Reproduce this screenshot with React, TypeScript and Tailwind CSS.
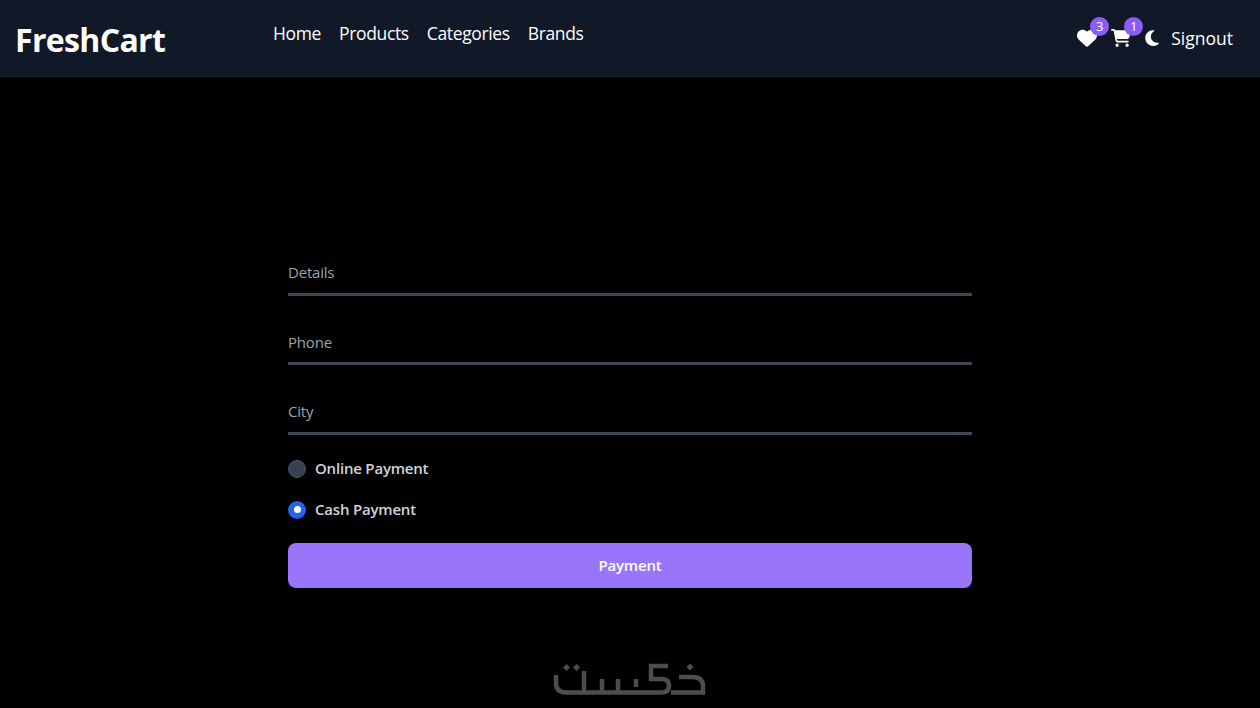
import { FaCartShopping, FaHeart, FaMoon } from 'react-icons/fa6';

const FONT = "font-['Open_Sans','Noto_Sans',sans-serif]";

function Field({ label }: { label: string }) {
  return (
    <div className="h-[39px] pb-[5px] border-b-[3px] border-[#404855] flex items-center">
      <span className="text-[15px] text-[#9ca3af] leading-5 tracking-[-0.2px]">{label}</span>
    </div>
  );
}

function KhamsatLogo() {
  return (
    <svg width="180" height="58" viewBox="0 0 180 58" fill="none" stroke="#4d4d4d" strokeWidth="4.5">
      {/* wordmark, drawn right to left */}
      <path d="M16 24V32Q16 41.5 26 41.5H107" />
      <path d="M44 20V41M62 28V41M78 28V41M96 28V36" />
      {/* the 5 in the middle */}
      <path d="M128 15H111V28H121Q129 28 129 34V35Q129 41.5 121 41.5H107" />
      <path d="M131 41.5H163V35Q163 26 152 26H139" />
      <rect x="24" y="14" width="5" height="5" fill="#4d4d4d" stroke="none" transform="rotate(45 26.5 16.5)" />
      <rect x="34" y="14" width="5" height="5" fill="#4d4d4d" stroke="none" transform="rotate(45 36.5 16.5)" />
      <rect x="147.5" y="13.5" width="5" height="5" fill="#4d4d4d" stroke="none" transform="rotate(45 150 16)" />
    </svg>
  );
}

export default function App() {
  return (
    <div className={`min-h-[708px] h-[708px] overflow-hidden bg-black ${FONT}`}>
      {/* Navbar */}
      <nav className="h-[77px] bg-[#111827] border-b border-[#1c2431] flex items-start justify-between pl-[15px] pr-[27px]">
        <div className="flex items-start">
          <span className="w-[258px] mt-[20px] text-[32px] leading-10 font-bold text-white tracking-[-0.65px]">FreshCart</span>
          <ul className="flex gap-[18px] mt-[19px] text-[17.5px] leading-7 text-white tracking-[-0.36px]">
            <li>Home</li>
            <li>Products</li>
            <li>Categories</li>
            <li>Brands</li>
          </ul>
        </div>
        <div className="flex items-center mt-[24px] text-white">
          <div className="relative w-[34px]">
            <FaHeart className="text-[20px]" />
            <span className="absolute -top-[11px] left-[13px] w-[19px] h-[19px] rounded-full bg-[#8b5cf6] text-[13px] leading-[19px] text-center">3</span>
          </div>
          <div className="relative w-[32px]">
            <FaCartShopping className="text-[20px]" />
            <span className="absolute -top-[11px] left-[13px] w-[19px] h-[19px] rounded-full bg-[#8b5cf6] text-[13px] leading-[19px] text-center">1</span>
          </div>
          <FaMoon className="text-[18px] mr-[10px]" />
          <span className="text-[17.5px] leading-7 tracking-[0px]">Signout</span>
        </div>
      </nav>

      {/* Checkout form */}
      <main className="w-[684px] mx-auto pt-[179.5px]">
        <div className="flex flex-col gap-[30.5px]">
          <Field label="Details" />
          <Field label="Phone" />
          <Field label="City" />
        </div>
        <div className="mt-[24px] flex items-center gap-[9px] h-5">
          <span className="w-[18px] h-[18px] rounded-full bg-[#374151] border border-[#4b5563]" />
          <span className="text-[15px] font-semibold text-[#d1d5db] tracking-[-0.2px]">Online Payment</span>
        </div>
        <div className="mt-[21px] flex items-center gap-[9px] h-5">
          <span className="w-[18px] h-[18px] rounded-full bg-[#2563eb] flex items-center justify-center">
            <span className="w-[7px] h-[7px] rounded-full bg-white" />
          </span>
          <span className="text-[15px] font-semibold text-[#d1d5db] tracking-[-0.2px]">Cash Payment</span>
        </div>
        <button className="mt-[23px] w-full h-[45px] rounded-lg bg-[#9875fb] text-white text-[15px] font-semibold tracking-[-0.2px]">
          Payment
        </button>
      </main>

      {/* Watermark */}
      <div className="flex justify-center mt-[63px]">
        <KhamsatLogo />
      </div>
    </div>
  );
}
